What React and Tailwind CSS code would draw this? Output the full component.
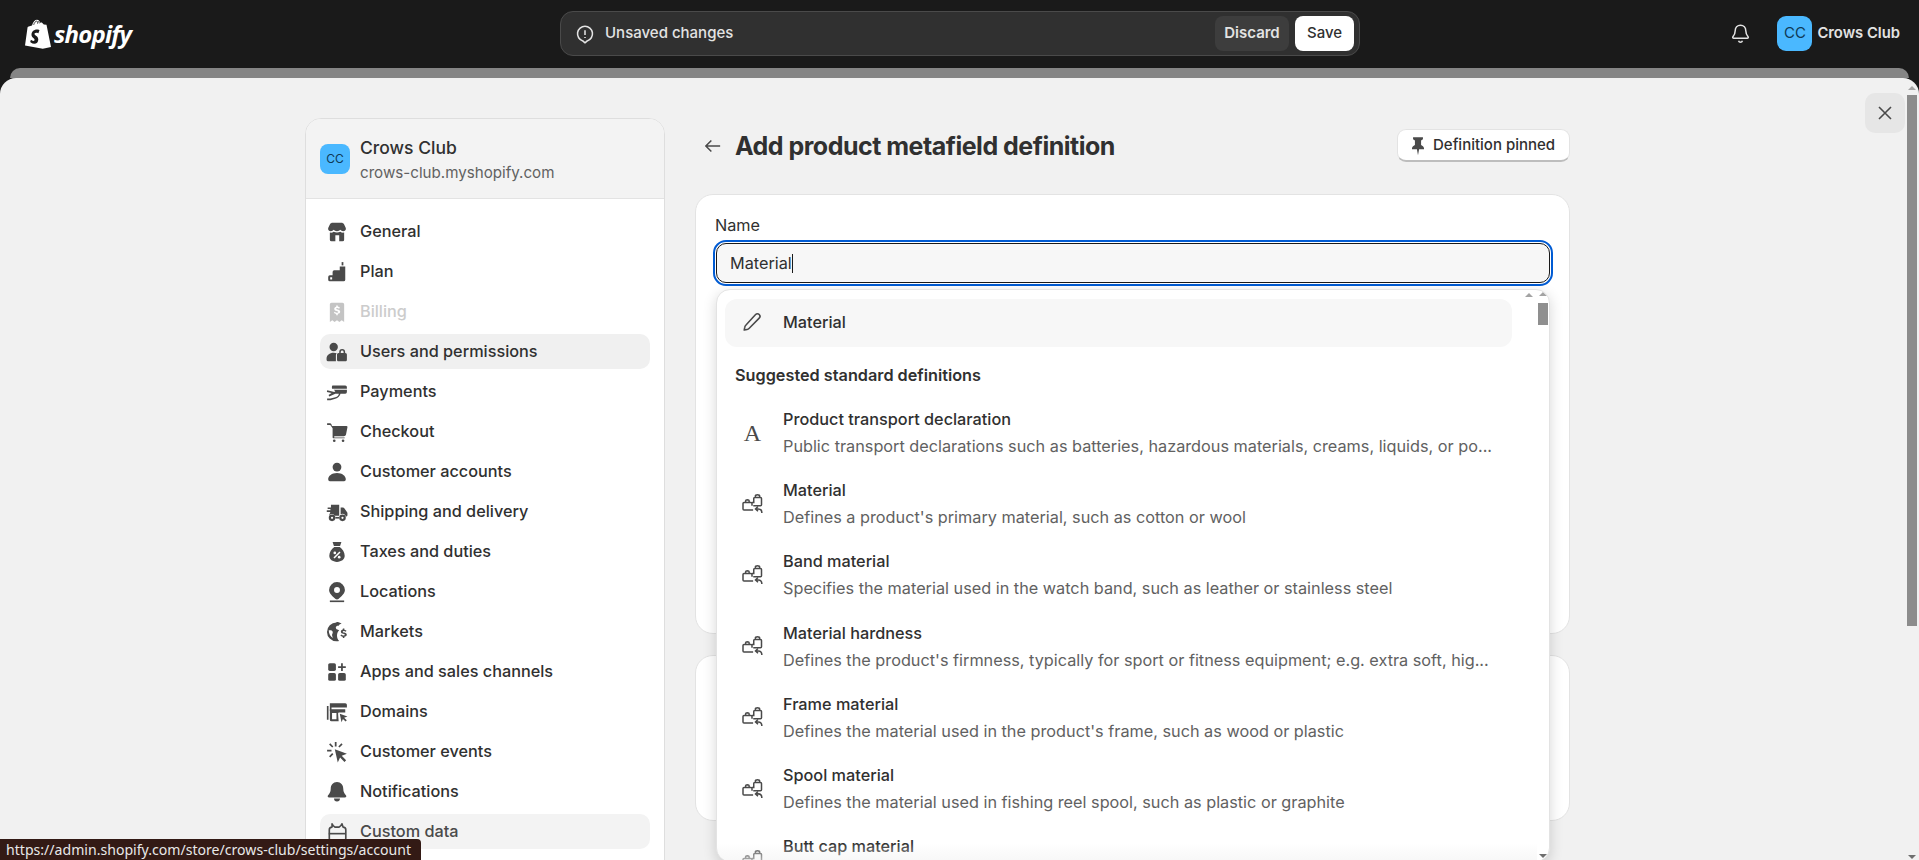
import React from "react";

const I = ({ children, className = "", fill = "#4a4a4a" }) => (
  <svg viewBox="0 0 20 20" fill={fill} fillRule="evenodd" className={`w-[22px] h-[22px] shrink-0 ${className}`}>{children}</svg>
);
const W = "#ffffff";
const Store = () => <I><path d="M6 1.500h8c1 0 1.800.5 2.300 1.300L18 6.300c.5 1.600-.7 3-2.400 3-1 0-2-.5-2.600-1.300-.6.8-1.700 1.300-3 1.300s-2.400-.5-3-1.300c-.6.8-1.600 1.300-2.600 1.300-1.700 0-2.900-1.400-2.400-3l1.700-3.500C4.200 2 5 1.500 6 1.500z"/><path d="M3.500 10.500c1.300.3 2.500 0 3.500-.7 1.800 1 4.200 1 6 0 1 .7 2.200 1 3.500.7v6.500a1.500 1.500 0 0 1-1.500 1.500H5A1.500 1.500 0 0 1 3.500 17zM8.500 13v5.500h3.500V13z"/></I>;
const PlanI = () => <I><path d="M14.200 1h1.600v3h-1.600z"/><path d="M12.500 5h5v12a1.500 1.500 0 0 1-1.500 1.500H3.500A1.500 1.500 0 0 1 2 17v-2.500A1.500 1.500 0 0 1 3.500 13H6v-3a1.500 1.500 0 0 1 1.500-1.500h5zM3.800 14.800v2h1.800v-2z"/></I>;
const Billing = () => <I fill="#c4c4c4"><path d="M5 1.500h10A1.500 1.500 0 0 1 16.500 3v16l-2.200-1.500-2.100 1.500-2.200-1.500-2.200 1.500-2.100-1.500L3.500 19V3A1.500 1.500 0 0 1 5 1.500z"/><path d="M9.300 4h1.400v1.100c.9.100 1.600.5 2 1l-.9.900c-.4-.4-.9-.7-1.600-.7-.6 0-1 .2-1 .6 0 .4.400.6 1.300.8 1.300.3 2.400.8 2.400 2 0 1-.8 1.700-2.200 1.900V13H9.300v-1.100c-.9-.1-1.700-.6-2.200-1.200l.9-.9c.5.500 1.100.9 1.900.9.700 0 1.200-.2 1.200-.7 0-.4-.4-.6-1.400-.9-1.200-.3-2.200-.7-2.200-1.900 0-1 .8-1.700 1.800-1.900z" fill={W}/></I>;
const Users = () => <I><circle cx="7" cy="5.500" r="3.800"/><path d="M.5 16c0-3 2.700-5.300 6.500-5.300 1 0 1.900.2 2.700.5-.5.500-.7 1.100-.7 1.800v5.500H2A1.500 1.500 0 0 1 .5 17z"/><path d="M12 11v-1a2.700 2.700 0 0 1 5.400 0v1h.1c1 0 1.500.7 1.500 1.500v4.500c0 .9-.6 1.500-1.500 1.500h-6c-.9 0-1.500-.6-1.500-1.500v-4.500c0-.8.600-1.500 1.500-1.500zm1.400 0h2.600v-1a1.300 1.300 0 0 0-2.600 0z"/></I>;
const Payments = () => <I><path d="M6 4h11.500A1.500 1.500 0 0 1 19 5.500V7H5.500C5.200 5.500 5.400 4 6 4z"/><path d="M7 8h12v2a1.500 1.500 0 0 1-1.500 1.500h-4.300c-.5 2-2.200 3.900-4.700 4.700L4 17.500H1V16h3l4.500-1.200c1.900-.6 3-1.800 3.200-3.300H8.500L3 14l-.7-1.300 2.800-1.800L.8 9.900l.3-1.400 6.400 1.400 1-.6z"/></I>;
const Cart = () => <I><path d="M1 2h2.300c.9 0 1.700.6 1.800 1.400l.3 1.100H18.500a1 1 0 0 1 1 1.200l-1.300 6.500a2 2 0 0 1-2 1.600H7.500v1.300h9.500V15.700H6.900c-.5 0-.9-.4-.9-.9V6.500L3.900 3.700H1z"/><circle cx="7.500" cy="18" r="1.200"/><circle cx="15.500" cy="18" r="1.200"/></I>;
const Person = () => <I><circle cx="10" cy="5.500" r="4"/><path d="M10 11c-4.700 0-8 2.700-8 5.700 0 1 .7 1.800 1.500 1.800h13c.8 0 1.500-.8 1.500-1.800 0-3-3.300-5.700-8-5.700z"/></I>;
const Truck = () => <I><path d="M4.500 3.500H12v10H8a3 3 0 0 0-5.300-.3L4 10H.7V8.500H4V7.300H1.500V5.800H4.500z"/><path d="M13.300 6h2c.6 0 1.200.3 1.500.8l2.400 3.400c.2.300.3.600.3 1V13a1 1 0 0 1-1 1h-.5a3 3 0 0 0-4.700-1.900z"/><path d="M5.500 12.300a3 3 0 1 0 0 6 3 3 0 0 0 0-6zm0 2a1 1 0 1 1 0 2 1 1 0 0 1 0-2zM15 12.300a3 3 0 1 0 0 6 3 3 0 0 0 0-6zm0 2a1 1 0 1 1 0 2 1 1 0 0 1 0-2z"/><path d="M8.500 14.500h3.500v1.500H8.500z"/></I>;
const Bag = () => <I><path d="M6 .800h8l-1.200 3.700H7.200zM7.500 5.500h5C15 7.200 17 10.200 17 13.500c0 3.300-3 5.500-7 5.500s-7-2.200-7-5.500c0-3.300 2-6.300 4.500-8z"/><path d="M12.200 9.500l1 1-5.400 5.400-1-1z" fill={W}/><circle cx="8" cy="10.800" r="1.200" fill={W}/><circle cx="12" cy="14.700" r="1.200" fill={W}/></I>;
const Pin = () => <I><path d="M10 1a7.200 7.200 0 0 1 7.200 7.200c0 3-3.200 6-5.900 8.100-.8.600-1.800.6-2.600 0C6 14.200 2.800 11.200 2.800 8.200A7.200 7.200 0 0 1 10 1zm0 4.500a2.700 2.700 0 1 0 0 5.400 2.700 2.700 0 0 0 0-5.400z"/><path d="M3.500 17.700h13v1.500h-13z"/></I>;
const Globe = () => <I><path d="M9.500 1c1.800 0 3.400.6 4.700 1.600-1.200.1-2.200.8-2.700 1.700-1.200-.3-2.200.3-2.500 1.200-.3 1 .3 2 1.300 2.300L12 8.500c-1.200 1-2 3-2 4.800 0 1.800.8 3.900 2 4.900-.8.300-1.600.3-2.500.3a8.600 8.600 0 0 1 0-17.200z"/><path d="M2.500 8.500c1.500-.5 3 0 3.500 1 .5 1.200-.3 1.800-.5 3-.1 1 .5 2 1 3-2.500-1-4-4-4-7z" fill={W}/><path d="M15.300 6.800h1.400v1.100c.9.100 1.600.5 2 1l-.9.900c-.4-.4-.9-.7-1.600-.7-.6 0-1 .2-1 .6 0 .4.400.6 1.300.8 1.300.3 2.400.8 2.400 2 0 1-.8 1.700-2.200 1.900v1.100h-1.400v-1.100c-.9-.1-1.700-.6-2.200-1.200l.9-.9c.5.500 1.100.9 1.900.9.700 0 1.200-.2 1.200-.7 0-.4-.4-.6-1.400-.9-1.200-.3-2.200-.7-2.200-1.900 0-1 .8-1.700 1.800-1.900z"/></I>;
const Apps = () => <I><rect x="2" y="2" width="7" height="7" rx="1.500"/><rect x="2" y="11" width="7" height="7" rx="1.500"/><rect x="11" y="11" width="7" height="7" rx="1.500"/><path d="M13.700 2h1.600v2.700H18v1.600h-2.700V9h-1.600V6.300H11V4.700h2.700z"/></I>;
const Domains = () => <I><path d="M3.500 2h14A1.500 1.500 0 0 1 19 3.500V6H5v3H3.500zM.8 4.500h1.500V17H.8z"/><path d="M3.500 7.500h14v3h-5.500c-.5 0-1 .5-1 1l.5 7H5A1.500 1.500 0 0 1 3.500 17zM5.500 11v5.500h4V11z"/><path d="M12.500 11.500l7 2.500-3 1.200 2.400 2.400-1.100 1.100-2.400-2.400-1.300 3z"/></I>;
const Events = () => <I><path d="M8 7.500l11 4.200-4.700 1.800 4 4-1.500 1.500-4-4L10.700 19.500z"/><path d="M8 1h1.600v4H8zM1 8h4v1.600H1zM2.800 3.200l1.100-1.100 2.800 2.800-1.100 1.100zM5.600 11l1.100 1.100-2.800 2.800-1.100-1.100zM11.200 4.900L14 2.100l1.100 1.100-2.800 2.800z"/></I>;
const BellS = () => <I><path d="M10 1c3.500 0 5.700 2.800 5.700 6 0 2.900 1.100 4.500 2.400 5.900.8.900.3 2.100-.9 2.100H2.800c-1.200 0-1.700-1.200-.9-2.100C3.200 11.500 4.300 9.900 4.300 7c0-3.200 2.200-6 5.700-6z"/><path d="M7.300 16h5.400a2.700 2.700 0 0 1-5.400 0z"/></I>;
const Custom = () => <svg viewBox="0 0 20 20" fill="none" stroke="#4a4a4a" strokeWidth="1.500" className="w-[22px] h-[22px] shrink-0"><path d="M5.500 2.500c.5 1.300 1.300 2.500 2.500 3h4c1.200-.5 2-1.700 2.500-3l1 3c1.500 0 2.500 1 2.500 2.500v8c0 1-.7 1.500-1.500 1.500h-12c-.8 0-1.500-.5-1.500-1.500V8c0-1.500 1-2.500 2.500-2.500z" strokeLinejoin="round"/><path d="M2.500 11.500h15"/></svg>;
const Meta = () => <svg viewBox="0 0 20 20" fill="none" stroke="#4a4a4a" strokeWidth="1.200" className="w-[25px] h-[25px] shrink-0"><path d="M10.500 14.300H3.200c-.5 0-.8-.3-.8-.8V9.200c0-.5.300-.8.800-.8h5.600c.5 0 .8.300.8.800v1.800M4.500 8.400V7c0-1 2.800-1 2.800 0v1.400"/><path d="M9.600 8.400h1.400V5.200c0-.5.300-.8.800-.8h4.600c.5 0 .8.300.8.800v5c0 .5-.3.800-.8.800h-5.800M12.300 4.400V3.200c0-1.300 3.400-1.300 3.400 0v1.200"/><path d="M17.500 16.800c0-2.100-1-3.300-3-3.300h-2M14.400 11.600l-2 1.900 2 1.900"/></svg>;
const Pencil = () => <svg viewBox="0 0 20 20" fill="none" stroke="#4a4a4a" strokeWidth="1.300" className="w-[24px] h-[24px] shrink-0"><path d="M13 3.800a2.100 2.100 0 0 1 3 3l-8.300 8.400c-.5.500-1.100.9-1.800 1l-2.400.5.500-2.400c.1-.7.500-1.300 1-1.800z" strokeLinejoin="round"/></svg>;

const nav = [
  ["General", Store], ["Plan", PlanI], ["Billing", Billing, "dim"], ["Users and permissions", Users, "sel"],
  ["Payments", Payments], ["Checkout", Cart], ["Customer accounts", Person], ["Shipping and delivery", Truck],
  ["Taxes and duties", Bag], ["Locations", Pin], ["Markets", Globe], ["Apps and sales channels", Apps],
  ["Domains", Domains], ["Customer events", Events], ["Notifications", BellS], ["Custom data", Custom, "sel2"],
];

const rows = [
  ["Product transport declaration", "Public transport declarations such as batteries, hazardous materials, creams, liquids, or po...", "A"],
  ["Material", "Defines a product's primary material, such as cotton or wool"],
  ["Band material", "Specifies the material used in the watch band, such as leather or stainless steel"],
  ["Material hardness", "Defines the product's firmness, typically for sport or fitness equipment; e.g. extra soft, hig..."],
  ["Frame material", "Defines the material used in the product's frame, such as wood or plastic"],
  ["Spool material", "Defines the material used in fishing reel spool, such as plastic or graphite"],
  ["Butt cap material", ""],
];

const Up = ({ className = "" }) => <div className={`w-0 h-0 border-x-[4px] border-x-transparent border-b-[4px] border-b-[#a3a3a3] ${className}`} />;
const Down = ({ className = "" }) => <div className={`w-0 h-0 border-x-[4px] border-x-transparent border-t-[4px] border-t-[#6e6e6e] ${className}`} />;

export default function App() {
  return (
    <div className="relative h-screen w-full overflow-hidden bg-[#1a1a1a] flex flex-col font-['Inter',sans-serif] text-[#303030]">
      <header className="h-[68px] shrink-0 flex items-center pl-[25px] pr-[19px] pb-[1px]">
        <div className="w-[535px] flex items-center gap-[3px] shrink-0">
          <svg viewBox="0 0 26 30" className="w-[26px] h-[30px] shrink-0">
            <path d="M21.500 5.700l-2.700-.2-2-2c-.2-.2-.5-.1-.7-.1l-1 .3C14.500 2 13.600.7 12 .7 10 .7 8 2.500 7 6.500L3.700 7.500c-1 .3-1 .3-1.200 1.300L0 26.500l17.800 3.300L26 28z" fill="#ffffff" />
            <path d="M14.500 11l-1.100 3.200s-1-.5-2.100-.5c-1.700 0-1.800 1-1.800 1.300 0 1.400 3.800 2 3.800 5.400 0 2.700-1.700 4.400-4 4.400-2.700 0-4.100-1.700-4.100-1.700l.7-2.400s1.400 1.200 2.600 1.200c.8 0 1.100-.6 1.100-1.100 0-1.900-3.100-2-3.100-5.100 0-2.600 1.900-5.200 5.700-5.200 1.400 0 2 .5 2 .5z" fill="#1a1a1a" />
            <path d="M8.700 5.900c.6-2.200 1.800-3.700 3.100-3.900M12.600 4.700c0-.8-.1-1.600-.4-2.500M14.300 4.300c-.2-.9-.5-1.500-.9-2" stroke="#1a1a1a" strokeWidth=".8" fill="none" />
          </svg>
          <span className="font-['Open_Sans',sans-serif] italic font-bold text-[24px] leading-none tracking-[-0.8px] text-white">shopify</span>
        </div>
        <div className="w-[800px] h-[45px] shrink-0 rounded-[13px] bg-[#303030] border border-[#4a4a4a] flex items-center pl-[13px] pr-[5px]">
          <svg viewBox="0 0 20 20" fill="none" stroke="#e3e3e3" strokeWidth="1.400" className="w-[22px] h-[22px] mr-[9px]"><path d="M10 3a6.800 6.800 0 0 1 2 13.300L10 18l-2-1.700A6.800 6.800 0 0 1 10 3z" strokeLinejoin="round"/><path d="M10 6.500v4.500M10 12.700v1"/></svg>
          <span className="text-[15px] font-medium text-[#e3e3e3]">Unsaved changes</span>
          <div className="flex-1" />
          <button className="w-[74px] h-[35px] rounded-[8px] bg-[#3d3d3d] text-[15px] font-semibold text-[#e3e3e3]">Discard</button>
          <button className="ml-[6px] w-[59px] h-[35px] rounded-[8px] bg-white text-[15px] font-medium text-[#303030]">Save</button>
        </div>
        <div className="flex-1" />
        <svg viewBox="0 0 20 20" fill="none" stroke="#e3e3e3" strokeWidth="1.300" className="w-[23px] h-[23px]"><path d="M10 2.800c2.800 0 4.600 2.100 4.600 4.800 0 2.700 1 4 2 5.200.4.600.1 1.300-.7 1.300H4.100c-.8 0-1.100-.7-.7-1.300 1-1.200 2-2.500 2-5.200 0-2.700 1.800-4.800 4.600-4.800z" strokeLinejoin="round"/><path d="M8.300 16.300a1.800 1.800 0 0 0 3.400 0"/></svg>
        <div className="ml-[25px] w-[35px] h-[35px] rounded-[9px] bg-[#4ab8ff] flex items-center justify-center text-[15px] text-[#0f3a57]">CC</div>
        <span className="ml-[5px] text-[14.800px] font-semibold text-[#e3e3e3]">Crows Club</span>
      </header>

      <div className="h-[10px] mx-[10px] shrink-0 bg-[#858585] rounded-t-[12px]" />

      <div className="relative flex-1 min-h-0 bg-[#f1f1f1] rounded-t-[16px] flex overflow-hidden">
        <div className="flex-1 min-w-0 pl-[305px] pt-[40px] flex items-start gap-[30px]">
          <aside className="w-[360px] shrink-0 h-[800px] bg-white border border-[#dedede] rounded-[16px] overflow-hidden">
            <div className="h-[80px] bg-[#f3f3f3] border-b border-[#e3e3e3] flex items-center pl-[14px] gap-[10px]">
              <div className="w-[30px] h-[30px] rounded-[8px] bg-[#4ab8ff] flex items-center justify-center text-[12px] text-[#0f3a57]">CC</div>
              <div className="flex flex-col gap-[5px] pt-[2px]">
                <span className="text-[17.500px] leading-[21px] font-medium">Crows Club</span>
                <span className="text-[15.150px] leading-[19px] text-[#616161]">crows-club.myshopify.com</span>
              </div>
            </div>
            <nav className="pt-[15px] pl-[14px] pr-[14px] flex flex-col gap-[5px]">
              {nav.map(([label, Icon, kind]) => (
                <div key={label} className={`h-[35px] rounded-[10px] flex items-center pl-[6px] gap-[12px] ${kind === "sel" ? "bg-[#f0f0f0]" : kind === "sel2" ? "bg-[#f3f3f3]" : ""}`}>
                  <Icon />
                  <span className={`text-[16.250px] font-medium ${kind === "dim" ? "text-[#cccccc]" : kind === "sel2" ? "text-[#4a4a4a]" : "text-[#303030]"}`}>{label}</span>
                </div>
              ))}
            </nav>
          </aside>

          <main className="w-[875px] shrink-0">
            <div className="h-[33px] mt-[11px] flex items-center pl-[7px]">
              <svg viewBox="0 0 20 20" fill="none" stroke="#4a4a4a" strokeWidth="1.400" className="w-[22px] h-[22px] mr-[11px]"><path d="M16.500 10h-13M8.500 5l-5 5 5 5" /></svg>
              <h1 className="text-[25px] font-[650] tracking-[-0.5px] text-[#303030] pt-[2px]">Add product metafield definition</h1>
              <div className="flex-1" />
              <button className="w-[173px] h-[33px] rounded-[9px] bg-white border border-[#e3e3e3] border-b-[#bdbdbd] border-b-2 flex items-center pl-[9px] pt-[1px] gap-[4px] text-[15px] font-medium">
                <svg viewBox="0 0 20 20" fill="#4a4a4a" className="w-[22px] h-[22px]"><path d="M5.500 2h9v1.800l-1.700 1.200v4.200c1.500.8 2.700 2 2.700 3.300v.5H11l-1 5.500-1-5.500H4.500v-.5c0-1.300 1.200-2.500 2.700-3.300V5L5.500 3.800z"/></svg>
                Definition pinned
              </button>
            </div>

            <section className="relative mt-[32px] h-[440px] bg-white border border-[#e3e3e3] rounded-[18px] px-[17px] pt-[20px]">
              <label className="block pl-[2px] text-[16.250px] leading-[20px] text-[#303030]">Name</label>
              <div className="mt-[5px] h-[46px] w-[840px] rounded-[13px] border-2 border-[#005bd3] p-px">
                <div className="h-full rounded-[10px] border border-[#1a1a1a] bg-[#f7f7f7] flex items-center pl-[13px] text-[16.250px]">
                  Material<span className="inline-block w-px h-[19px] bg-[#1a1a1a]" />
                </div>
              </div>

              <div className="absolute left-[20px] top-[94px] w-[834px] h-[573px] bg-white border border-[#e3e3e3] rounded-[14px] shadow-[0_4px_14px_rgba(0,0,0,0.16)] flex overflow-hidden">
                <div className="flex-1 min-w-0 pl-[8px] pt-[9px]">
                  <div className="h-[48px] w-[787px] rounded-[12px] bg-[#f7f7f7] flex items-center pl-[15px] pb-[2px] gap-[19px]">
                    <Pencil />
                    <span className="text-[16.250px] font-medium">Material</span>
                  </div>
                  <div className="pl-[10px] mt-[18px] h-[20px] flex items-center text-[16.250px] font-semibold">Suggested standard definitions</div>
                  <div className="mt-[12.500px]">
                    {rows.map(([title, desc, a]) => (
                      <div key={title} className="h-[71.200px] flex items-center pl-[17px]">
                        <div className="w-[21px] flex justify-center shrink-0">
                          {a ? <span className="font-['Liberation_Serif',serif] text-[24px] leading-none text-[#4a4a4a]">A</span> : <Meta />}
                        </div>
                        <div className="ml-[20px] flex flex-col gap-[6px]">
                          <span className="text-[16.250px] leading-[21px] font-medium">{title}</span>
                          <span className="h-[21px] text-[16.250px] leading-[21px] text-[#616161] whitespace-nowrap">{desc}</span>
                        </div>
                      </div>
                    ))}
                  </div>
                </div>
                <div className="w-[12px] shrink-0 pt-[2px] flex flex-col items-center">
                  <Up />
                  <div className="mt-[7px] w-[10px] h-[22px] bg-[#8f8f8f]" />
                  <div className="flex-1" />
                  <Down className="mb-[3px]" />
                </div>
                <Up className="absolute top-[3px] left-[808px]" />
                <div className="absolute left-0 bottom-0 w-[820px] h-[18px] bg-gradient-to-b from-transparent to-[#f2f2f2]/60" />
              </div>
            </section>

            <section className="mt-[21px] h-[166px] bg-white border border-[#e3e3e3] rounded-[18px]" />
          </main>
        </div>

        <button className="absolute top-[15px] left-[1865px] w-[40px] h-[40px] rounded-[10px] bg-[#e6e6e6] flex items-center justify-center">
          <svg viewBox="0 0 20 20" fill="none" stroke="#4a4a4a" strokeWidth="1.600" className="w-[20px] h-[20px]"><path d="M4 4l12 12M16 4L4 16" /></svg>
        </button>

        <div className="w-[12px] shrink-0 pt-[8px] flex flex-col items-start pl-[1px]">
          <Up />
          <div className="-ml-[1px] mt-[5px] w-[10px] h-[531px] bg-[#8c8c8c]" />
          <div className="flex-1" />
          <Down className="mb-[1px]" />
        </div>
      </div>

      <div className="absolute left-0 bottom-0 h-[21px] w-[421px] bg-[#331a15] rounded-tr-[4px] pl-[6px] flex items-center font-['Noto_Sans',sans-serif] text-[14.100px] text-[#e8e8e8] whitespace-nowrap overflow-hidden">
        https://admin.shopify.com/store/crows-club/settings/account
      </div>
    </div>
  );
}
